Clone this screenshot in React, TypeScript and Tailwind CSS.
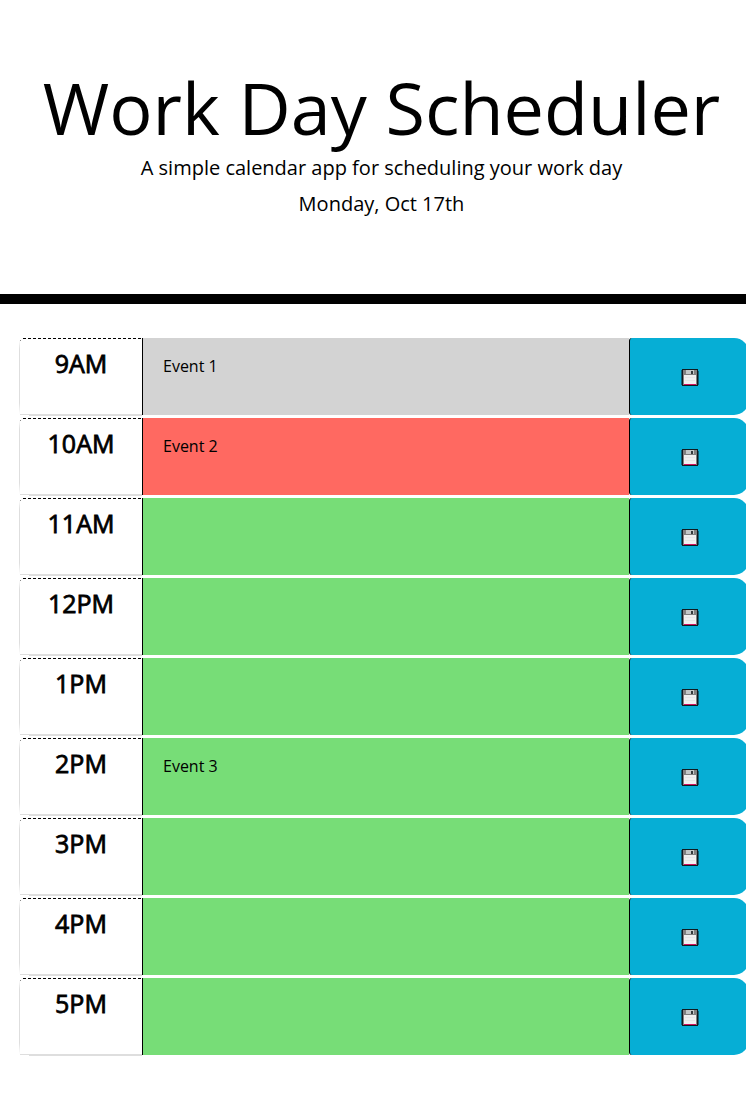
type Status = "past" | "present" | "future";

const blocks: { hour: string; text: string; status: Status }[] = [
  { hour: "9AM", text: "Event 1", status: "past" },
  { hour: "10AM", text: "Event 2", status: "present" },
  { hour: "11AM", text: "", status: "future" },
  { hour: "12PM", text: "", status: "future" },
  { hour: "1PM", text: "", status: "future" },
  { hour: "2PM", text: "Event 3", status: "future" },
  { hour: "3PM", text: "", status: "future" },
  { hour: "4PM", text: "", status: "future" },
  { hour: "5PM", text: "", status: "future" },
];

const colors: Record<Status, string> = {
  past: "bg-[#d3d3d3]",
  present: "bg-[#ff6961]",
  future: "bg-[#77dd77]",
};

function SaveIcon() {
  return (
    <svg width="18" height="18" viewBox="0 0 18 18" shapeRendering="crispEdges">
      <path d="M1 0h15l1 1v16H1z" fill="#101a20" />
      <path d="M0 1h1v15H0zM17 2h1v14h-1z" fill="#0b5f75" />
      <path d="M2 1h13l1 1v14H2z" fill="#808080" />
      <path d="M5 1h8v4H5z" fill="#c4c8c8" />
      <path d="M10 2h2v3h-2z" fill="#343a3c" />
      <path d="M3 6h12v9H3z" fill="#f0f0f0" />
      <path d="M4 8h10v1H4zM4 11h10v1H4z" fill="#e6e6e6" />
      <path d="M3 15h12v1H3z" fill="#d0105f" />
    </svg>
  );
}

export default function App() {
  return (
    <div className="h-[1104px] w-full overflow-hidden bg-white font-['Open_Sans',sans-serif] text-black">
      <div className="w-[763px]">
        <header className="h-[304px] border-b-[10px] border-black pt-[64px] text-center">
          <h1 className="text-[72px] leading-[86px] font-normal">Work Day Scheduler</h1>
          <p className="mt-[3px] text-[20px] leading-[30px]">A simple calendar app for scheduling your work day</p>
          <p className="mt-[6px] text-[20px] leading-[30px]">Monday, Oct 17th</p>
        </header>
        <main className="flex flex-col gap-[3px] pt-[34px] pl-[19px]">
          {blocks.map((block) => (
            <div key={block.hour} className="flex h-[77px]">
              <div className="flex w-[123px] flex-col">
                <div className="ml-[4px] h-px w-[118px] bg-[repeating-linear-gradient(90deg,#000_0_3px,transparent_3px_5px)]" />
                <div className="flex flex-1">
                  <div className="mt-px w-px bg-[linear-gradient(transparent,#dedede_12%,#dedede_85%,transparent)]">
                    <div className="ml-px h-px w-px bg-[#888]" />
                  </div>
                  <div className="flex-1 pt-[5px] text-center text-[25px] leading-[38px] font-normal [-webkit-text-stroke:0.8px_black]">
                    {block.hour}
                  </div>
                </div>
                <div className="ml-px h-px bg-[#dedede]" />
                <div className="-mb-px ml-[10px] h-px bg-[#dedede]" />
              </div>
              <div className={`w-[487px] border-l border-black pt-[16px] pl-[20px] text-[16px] leading-[24px] ${colors[block.status]}`}>
                {block.text}
              </div>
              <button
                aria-label={`Save ${block.hour}`}
                className="flex w-[120px] items-center rounded-l-[3px] rounded-r-[15px] border-l border-black bg-[#06aed5] pt-[2px] pl-[51px]"
              >
                <SaveIcon />
              </button>
            </div>
          ))}
        </main>
      </div>
    </div>
  );
}
